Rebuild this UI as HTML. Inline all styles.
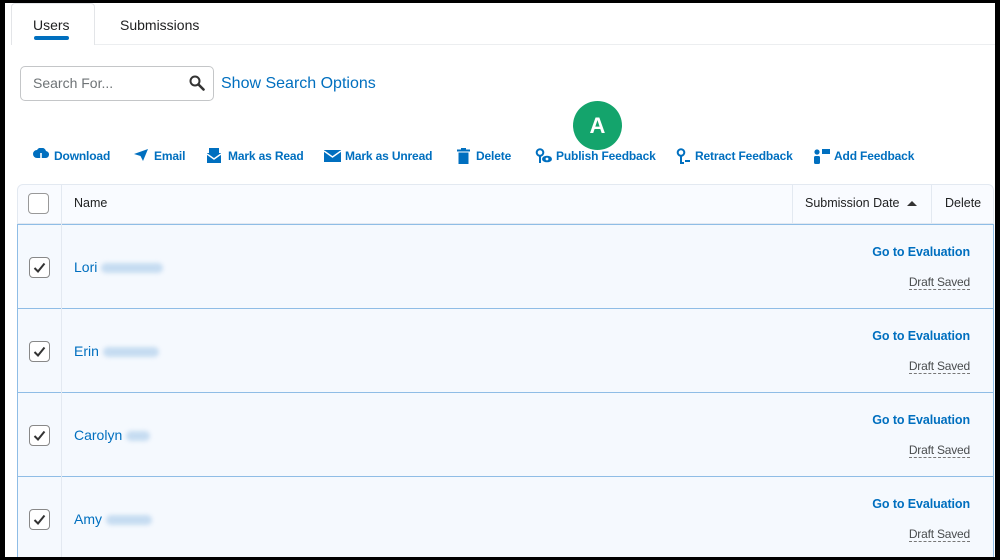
<!DOCTYPE html>
<html><head><style>
*{margin:0;padding:0;box-sizing:border-box}
body{width:1000px;height:560px;background:#000;position:relative;overflow:hidden;font-family:"Liberation Sans",sans-serif}
#pg{position:absolute;left:5px;top:3px;width:990px;height:554px;background:#fff;overflow:hidden}
.a{position:absolute}
.tab{font-size:14px;color:#202122}
.blue{color:#006fbf}
.tb{font-size:12px;letter-spacing:-0.15px;font-weight:bold;color:#006fbf;top:146px;position:absolute;white-space:nowrap}
.ic{position:absolute;top:145px}
.row{position:absolute;left:12px;width:977px;height:85px;background:#f5f9fe;border:1px solid #8fbde6;border-bottom:none}
.cb{position:absolute;left:11px;width:21px;height:21px;border:1px solid #888;border-radius:4px;background:#fff}
.cb svg{position:absolute;left:3px;top:4px}
.nm{position:absolute;left:56px;font-size:14px;color:#006fbf}
.blur{display:inline-block;height:10px;background:#c6dcf1;border-radius:5px;filter:blur(2px);vertical-align:middle;margin-left:4px}
.ge{position:absolute;right:23px;font-size:12.5px;font-weight:bold;color:#006fbf;letter-spacing:-0.1px}
.ds{position:absolute;right:23px;font-size:12px;color:#494c4e;border-bottom:1px dashed #777;line-height:13px;letter-spacing:-0.2px}
</style></head><body><div id="pg">
<div class="a" style="left:6px;top:0;width:84px;height:42px;border:1px solid #e3e5e8;border-bottom:none;border-radius:4px 4px 0 0;background:#fff"></div>
<div class="a" style="left:90px;top:41px;width:900px;border-top:1px solid #eceef0"></div>
<div class="a tab" style="left:28px;top:14px">Users</div>
<div class="a" style="left:29px;top:33px;width:35px;height:4px;background:#006fbf;border-radius:2px"></div>
<div class="a tab" style="left:115px;top:14px">Submissions</div>
<div class="a" style="left:15px;top:63px;width:194px;height:35px;border:1px solid #c4c6c8;border-radius:5px"></div>
<div class="a" style="left:28px;top:72px;font-size:14px;color:#6e7376">Search For...</div>
<svg class="a" style="left:184px;top:72px" width="16" height="16" viewBox="0 0 16 16"><circle cx="6" cy="6" r="4.5" fill="none" stroke="#333" stroke-width="2"/><path d="M9.5 9.5L14.5 14.5" stroke="#333" stroke-width="2.6" stroke-linecap="round"/></svg>
<div class="a blue" style="left:216px;top:72px;font-size:16px">Show Search Options</div>
<div class="a" style="left:568px;top:98px;width:49px;height:49px;border-radius:50%;background:#14a46c;color:#fff;font-weight:bold;font-size:22px;text-align:center;line-height:49px">A</div>

<svg class="ic" style="left:28px" width="16" height="15" viewBox="0 0 16 15"><path d="M4 10a4 4 0 010-8 5 5 0 019 1 3.5 3.5 0 01-1 7z" fill="#006fbf"/><path d="M8 5v9M5.5 11.5L8 14l2.5-2.5" stroke="#fff" stroke-width="1.6" fill="none"/></svg>
<div class="tb" style="left:49px">Download</div>
<svg class="ic" style="left:128px" width="16" height="14" viewBox="0 0 16 14"><path d="M1 6L15 1 10 13 7.5 8z" fill="#006fbf"/></svg>
<div class="tb" style="left:149px">Email</div>
<svg class="ic" style="left:201px" width="16" height="15" viewBox="0 0 16 15"><rect x="3" y="0" width="10" height="6" fill="#006fbf"/><path d="M1 5h14v10H1z" fill="#006fbf"/><path d="M1 6l7 5 7-5" stroke="#fff" stroke-width="1.4" fill="none"/></svg>
<div class="tb" style="left:223px">Mark as Read</div>
<svg class="ic" style="left:319px;top:147px" width="17" height="12" viewBox="0 0 17 12"><rect width="17" height="12" fill="#006fbf"/><path d="M0 1l8.5 6 8.5-6" stroke="#fff" stroke-width="1.5" fill="none"/></svg>
<div class="tb" style="left:340px">Mark as Unread</div>
<svg class="ic" style="left:452px" width="13" height="16" viewBox="0 0 13 16"><rect x="0" y="1.5" width="13" height="2" fill="#006fbf"/><rect x="4" y="0" width="5" height="2" fill="#006fbf"/><path d="M1.5 4.5h10V16h-10z" fill="#006fbf"/></svg>
<div class="tb" style="left:471px">Delete</div>
<svg class="ic" style="left:530px" width="18" height="16" viewBox="0 0 18 16"><circle cx="5" cy="4.5" r="3.3" fill="none" stroke="#006fbf" stroke-width="2"/><path d="M5 8v7" stroke="#006fbf" stroke-width="2"/><ellipse cx="12" cy="11" rx="5" ry="3.3" fill="#006fbf"/><circle cx="12" cy="11" r="1.4" fill="#fff"/></svg>
<div class="tb" style="left:551px">Publish Feedback</div>
<svg class="ic" style="left:671px" width="15" height="16" viewBox="0 0 15 16"><circle cx="5" cy="4.5" r="3.3" fill="none" stroke="#006fbf" stroke-width="2"/><path d="M5 8v7h3M9 13h5" stroke="#006fbf" stroke-width="2" fill="none"/></svg>
<div class="tb" style="left:690px">Retract Feedback</div>
<svg class="ic" style="left:808px" width="17" height="16" viewBox="0 0 17 16"><circle cx="4" cy="4" r="2.6" fill="#006fbf"/><rect x="1" y="8" width="6" height="8" rx="1.5" fill="#006fbf"/><rect x="9" y="1" width="8" height="5" fill="#006fbf"/></svg>
<div class="tb" style="left:829px">Add Feedback</div>

<div class="a" style="left:12px;top:181px;width:977px;height:40px;background:#f9fbff;border:1px solid #e3e9f1;border-radius:6px 6px 0 0"></div>
<div class="a" style="left:56px;top:181px;height:373px;border-left:1px solid #e3e9f1;z-index:2"></div>
<div class="a" style="left:787px;top:181px;height:40px;border-left:1px solid #e3e9f1"></div>
<div class="a" style="left:926px;top:181px;height:40px;border-left:1px solid #e3e9f1"></div>
<div class="a" style="left:23px;top:190px;width:21px;height:21px;border:1px solid #999;border-radius:4px;background:#fff"></div>
<div class="a" style="left:69px;top:193px;font-size:12.5px;color:#202122">Name</div>
<div class="a" style="left:800px;top:193px;font-size:12.5px;color:#202122">Submission Date</div>
<svg class="a" style="left:902px;top:197px" width="10" height="6"><path d="M0 6L5 1 10 6z" fill="#333"/></svg>
<div class="a" style="left:940px;top:193px;font-size:12.5px;color:#202122">Delete</div>

<div class="row" style="top:221px"><div class="cb" style="top:32px"><svg width="13" height="11"><path d="M1.5 6l3.5 3.5 6.5-8" stroke="#333" stroke-width="2" fill="none"/></svg></div><div class="nm" style="top:34px">Lori<span class="blur" style="width:62px"></span></div><div class="ge" style="top:20px">Go to Evaluation</div><div class="ds" style="top:51px">Draft Saved</div></div>
<div class="row" style="top:305px"><div class="cb" style="top:32px"><svg width="13" height="11"><path d="M1.5 6l3.5 3.5 6.5-8" stroke="#333" stroke-width="2" fill="none"/></svg></div><div class="nm" style="top:34px">Erin<span class="blur" style="width:56px"></span></div><div class="ge" style="top:20px">Go to Evaluation</div><div class="ds" style="top:51px">Draft Saved</div></div>
<div class="row" style="top:389px"><div class="cb" style="top:32px"><svg width="13" height="11"><path d="M1.5 6l3.5 3.5 6.5-8" stroke="#333" stroke-width="2" fill="none"/></svg></div><div class="nm" style="top:34px">Carolyn<span class="blur" style="width:24px"></span></div><div class="ge" style="top:20px">Go to Evaluation</div><div class="ds" style="top:51px">Draft Saved</div></div>
<div class="row" style="top:473px"><div class="cb" style="top:32px"><svg width="13" height="11"><path d="M1.5 6l3.5 3.5 6.5-8" stroke="#333" stroke-width="2" fill="none"/></svg></div><div class="nm" style="top:34px">Amy<span class="blur" style="width:46px"></span></div><div class="ge" style="top:20px">Go to Evaluation</div><div class="ds" style="top:51px">Draft Saved</div></div>
</div></body></html>
